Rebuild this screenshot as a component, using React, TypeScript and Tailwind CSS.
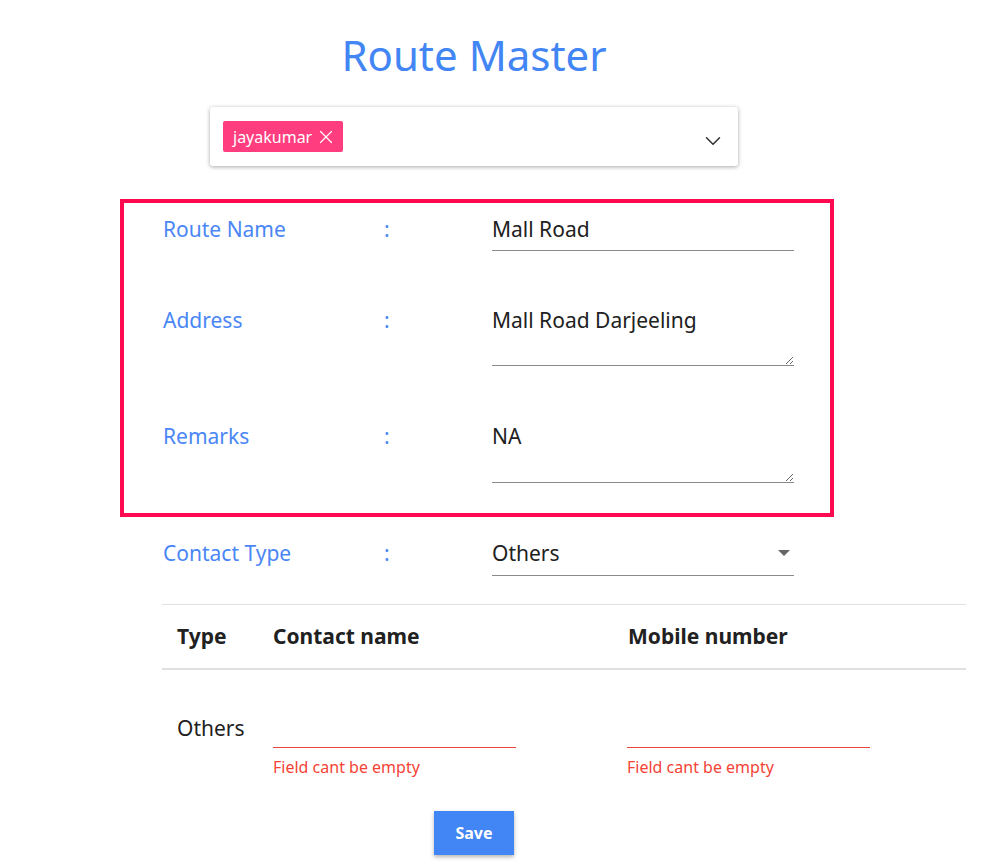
import React from 'react';
import { ChevronDown, X } from 'lucide-react';

const font = { fontFamily: '"Noto Sans", "Open Sans", sans-serif' };

function Row({ label, children, className = '' }: { label: string; children: React.ReactNode; className?: string }) {
  return (
    <div className={`flex items-start ${className}`}>
      <div className="w-[221px] text-[21px] leading-[30px] text-[#4a86f5]">{label}</div>
      <div className="w-[108px] text-[21px] leading-[30px] text-[#4a86f5]">:</div>
      <div className="w-[302px]">{children}</div>
    </div>
  );
}

export default function App() {
  return (
    <div className="w-[981px] min-h-[868px] bg-white text-[#212121]" style={font}>
      <div className="w-[948px] flex flex-col items-center">
        <h1 className="mt-[26px] text-[42px] leading-[58px] text-[#4285f4]">Route Master</h1>

        {/* user picker */}
        <div className="mt-[23px] w-[528px] h-[59px] bg-white rounded-[3px] shadow-[0_1px_4px_rgba(0,0,0,0.35)] flex items-center justify-between pl-[13px] pr-[12px]">
          <span className="h-[31px] pl-[10px] pr-[6px] rounded-[2px] bg-[#ff3d7f] text-white text-[16px] flex items-center gap-[3px]">
            jayakumar
            <X size={22} strokeWidth={1.3} />
          </span>
          <ChevronDown size={26} strokeWidth={1.4} className="mt-[8px] text-[#333]" />
        </div>
      </div>

      {/* highlighted block */}
      <div className="mt-[33px] ml-[120px] w-[714px] border-[4px] border-[#ff0a50] pl-[39px] pt-[11px] pb-[30px]">
        <Row label="Route Name">
          <input
            defaultValue="Mall Road"
            className="w-full text-[21px] leading-[30px] h-[30px] pb-0 mb-[6px] outline-none bg-transparent"
          />
          <div className="border-b border-[#8a8a8a]" />
        </Row>
        <Row label="Address" className="mt-[54px]">
          <textarea
            defaultValue="Mall Road Darjeeling"
            rows={2}
            className="block w-full h-[61px] text-[21px] leading-[30px] p-0 outline-none border-b border-[#8a8a8a]"
          />
        </Row>
        <Row label="Remarks" className="mt-[55px]">
          <textarea
            defaultValue="NA"
            rows={2}
            className="block w-full h-[62px] text-[21px] leading-[30px] p-0 outline-none border-b border-[#8a8a8a]"
          />
        </Row>
      </div>

      <div className="ml-[163px] mt-[21px]">
        <Row label="Contact Type">
          <div className="flex items-center justify-between h-[30px] mb-[7px] text-[21px] leading-[30px]">
            <span>Others</span>
            <span className="mr-[4px] w-0 h-0 border-l-[6px] border-r-[6px] border-t-[6px] border-l-transparent border-r-transparent border-t-[#666]" />
          </div>
          <div className="border-b border-[#8a8a8a]" />
        </Row>
      </div>

      {/* contacts table */}
      <div className="ml-[162px] mt-[28px] w-[804px]">
        <div className="h-[66px] border-t border-[#e0e0e0] border-b-2 border-b-[#e0e0e0] flex items-center text-[21px] font-bold">
          <div className="w-[111px] pl-[15px]">Type</div>
          <div className="w-[355px]">Contact name</div>
          <div>Mobile number</div>
        </div>
        <div className="flex items-start pt-[43px]">
          <div className="w-[111px] pl-[15px] text-[21px] leading-[30px]">Others</div>
          <div className="w-[354px]">
            <input className="block w-[243px] h-[35px] outline-none border-b border-[#e8453c]" />
            <div className="mt-[9px] text-[16px] leading-[20px] text-[#f44336]">Field cant be empty</div>
          </div>
          <div>
            <input className="block w-[243px] h-[35px] outline-none border-b border-[#e8453c]" />
            <div className="mt-[9px] text-[16px] leading-[20px] text-[#f44336]">Field cant be empty</div>
          </div>
        </div>
      </div>

      <div className="w-[948px] flex justify-center mt-[34px]">
        <button className="w-[80px] h-[44px] bg-[#4285f4] text-white text-[16px] font-bold shadow-[0_2px_4px_rgba(0,0,0,0.3)]">
          Save
        </button>
      </div>
    </div>
  );
}
